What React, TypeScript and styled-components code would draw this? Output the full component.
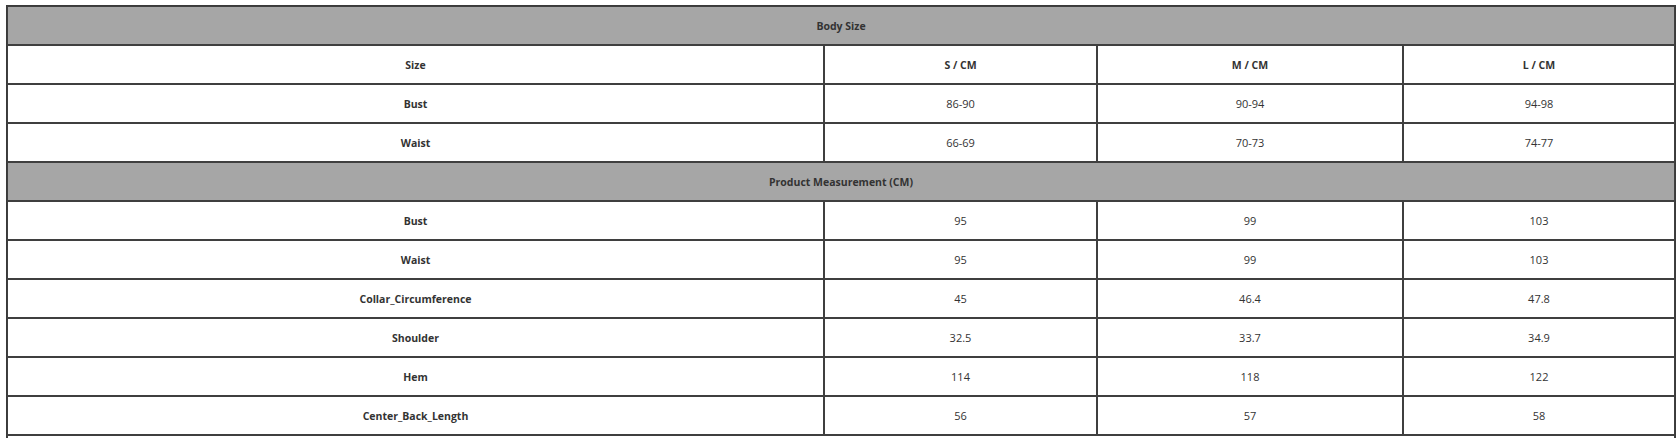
import React from "react";
import styled, { createGlobalStyle } from "styled-components";

const Global = createGlobalStyle`
  html, body { margin: 0; padding: 0; background: #ffffff; }
  body { font-family: "Open Sans", "Liberation Sans", sans-serif; }
`;

const Table = styled.div`
  display: grid;
  grid-template-columns: 817px 273px 306px 272px;
  grid-auto-rows: 39px;
  width: max-content;
  margin: 5px 0 0 6px;
  border: 1px solid #3a3a3a;
`;

const Cell = styled.div<{ $bold?: boolean }>`
  box-sizing: border-box;
  border: 1px solid #3f3f3f;
  display: flex;
  align-items: center;
  justify-content: center;
  font-size: ${(p) => (p.$bold ? "10.5px" : "11px")};
  color: #333333;
  font-weight: ${(p) => (p.$bold ? 700 : 400)};
`;

const Section = styled(Cell)`
  grid-column: 1 / -1;
  background: #a6a6a6;
  font-weight: 700;
  font-size: 10.5px;
`;

const Spacer = styled(Cell)`
  grid-column: 1 / -1;
`;

type Row = [string, string, string, string];

const bodyRows: Row[] = [
  ["Bust", "86-90", "90-94", "94-98"],
  ["Waist", "66-69", "70-73", "74-77"],
];

const productRows: Row[] = [
  ["Bust", "95", "99", "103"],
  ["Waist", "95", "99", "103"],
  ["Collar_Circumference", "45", "46.4", "47.8"],
  ["Shoulder", "32.5", "33.7", "34.9"],
  ["Hem", "114", "118", "122"],
  ["Center_Back_Length", "56", "57", "58"],
];

const DataRow = ({ row }: { row: Row }) => (
  <>
    <Cell $bold>{row[0]}</Cell>
    <Cell>{row[1]}</Cell>
    <Cell>{row[2]}</Cell>
    <Cell>{row[3]}</Cell>
  </>
);

export default function App() {
  return (
    <>
      <Global />
      <Table>
        <Section>Body Size</Section>
        <Cell $bold>Size</Cell>
        <Cell $bold>S / CM</Cell>
        <Cell $bold>M / CM</Cell>
        <Cell $bold>L / CM</Cell>
        {bodyRows.map((r, i) => (
          <DataRow key={"b" + i} row={r} />
        ))}
        <Section>Product Measurement (CM)</Section>
        {productRows.map((r, i) => (
          <DataRow key={"p" + i} row={r} />
        ))}
        <Spacer />
      </Table>
    </>
  );
}
